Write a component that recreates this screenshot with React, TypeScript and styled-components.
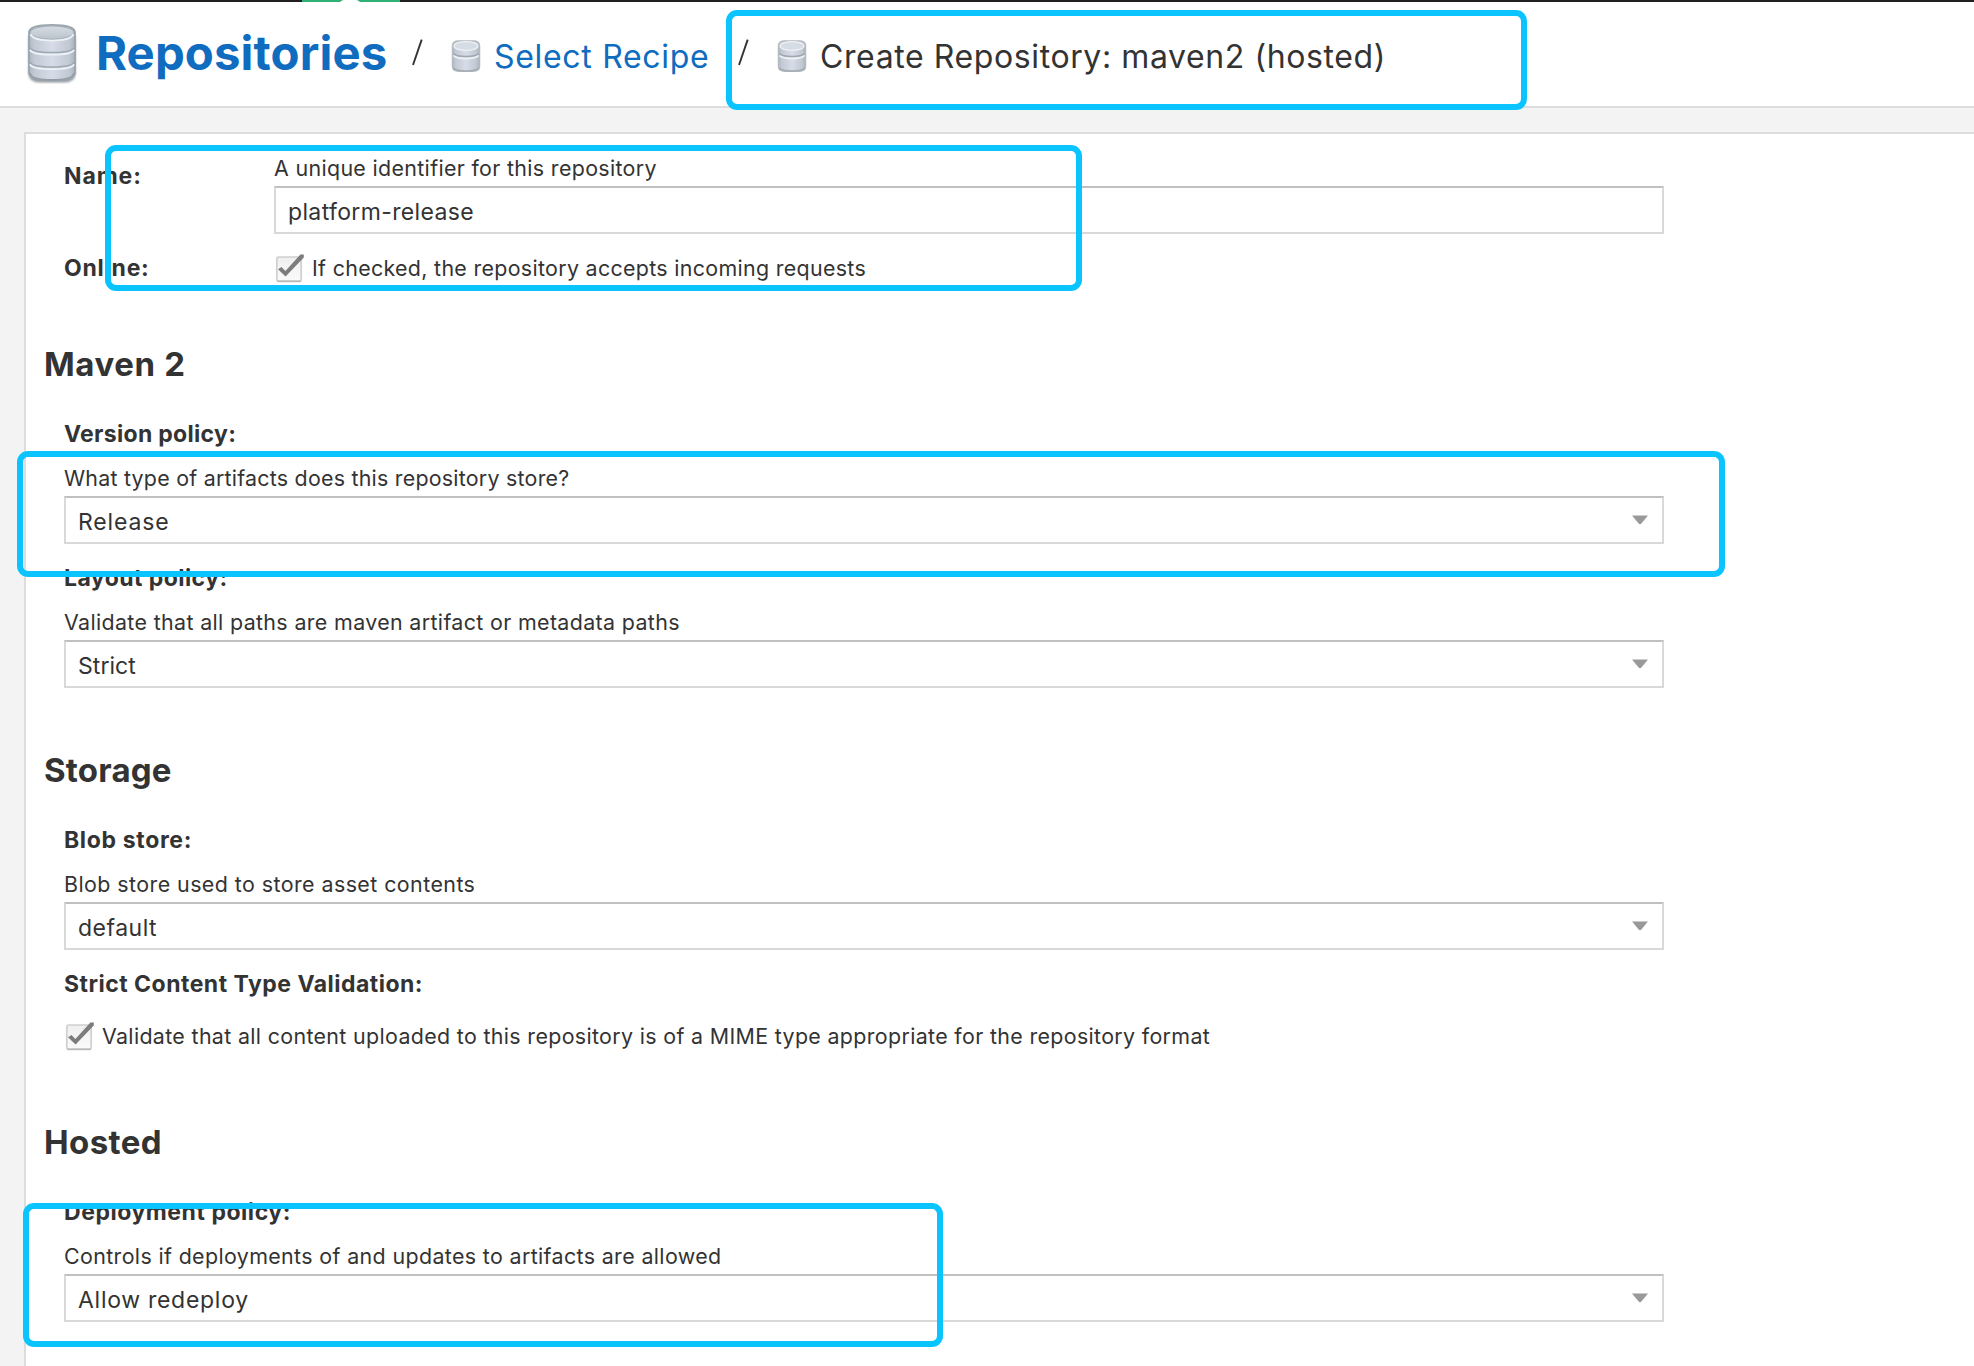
import React from "react";
import styled, { createGlobalStyle } from "styled-components";

const GlobalStyle = createGlobalStyle`
  *, *::before, *::after { box-sizing: border-box; }
  body {
    margin: 0;
    background: #f3f3f3;
    color: #333;
    font-family: Inter, "Open Sans", sans-serif;
    overflow: hidden;
  }
`;

const Page = styled.div`
  position: relative;
  display: flex;
  flex-direction: column;
  height: 1366px;
  overflow: hidden;
`;

const TopBar = styled.div`
  flex: none;
  height: 2px;
  padding-left: 302px;
  background: #221f20;
`;

const ActiveTab = styled.svg`
  display: block;
  width: 98px;
  height: 2px;
`;

const Header = styled.header`
  flex: none;
  display: flex;
  align-items: flex-start;
  height: 106px;
  padding-left: 26px;
  background: #fff;
  border-bottom: 2px solid #ddd;
`;

const Title = styled.h1`
  margin: 20px 0 0 18px;
  width: 316px;
  font-size: 47.3px;
  line-height: 62px;
  font-weight: 700;
  letter-spacing: 0.13px;
  color: #0f6cbf;
  white-space: nowrap;
`;

const Slash = styled.svg<{ $gap: number }>`
  flex: none;
  width: 12px;
  height: 28px;
  margin: 36px ${(p) => p.$gap}px 0 0;
`;

const Crumb = styled.span<{ $link?: boolean; $width: number; $track: number }>`
  margin: 35px 0 0 13px;
  width: ${(p) => p.$width}px;
  font-size: 32px;
  line-height: 40px;
  letter-spacing: ${(p) => p.$track}px;
  color: ${(p) => (p.$link ? "#0f6cbf" : "#333")};
  white-space: nowrap;
`;

const BigIcon = styled.svg`
  flex: none;
  width: 52px;
  height: 62px;
  margin-top: 20px;
`;

const SmallIcon = styled.svg`
  flex: none;
  width: 30px;
  height: 34px;
  margin-top: 37px;
`;

const Body = styled.main`
  flex: 1;
  padding: 24px 0 0 24px;
`;

const Panel = styled.form`
  height: 100%;
  padding: 19px 0 0 18px;
  background: #fff;
  border: solid #ddd;
  border-width: 2px 0 0 2px;
`;

const Fields = styled.div`
  width: 1620px;
  padding-left: 20px;
`;

const Row = styled.div<{ $top?: number }>`
  display: grid;
  grid-template-columns: 210px 1fr;
  margin-top: ${(p) => p.$top ?? 0}px;
`;

const Section = styled.section<{ $top: number }>`
  margin-top: ${(p) => p.$top}px;
`;

const Heading = styled.h2<{ $track: number }>`
  margin: 0;
  height: 75px;
  font-size: 33px;
  line-height: 40px;
  font-weight: 700;
  letter-spacing: ${(p) => p.$track}px;
`;

const Label = styled.label<{ $top?: number; $track: number }>`
  display: block;
  margin-top: ${(p) => p.$top ?? 0}px;
  font-size: 23px;
  line-height: 30px;
  font-weight: 700;
  letter-spacing: ${(p) => p.$track}px;
  white-space: nowrap;
`;

const Help = styled.div<{ $top?: number; $track: number }>`
  margin-top: ${(p) => p.$top ?? 0}px;
  height: 33px;
  font-size: 21.4px;
  line-height: 30px;
  letter-spacing: ${(p) => p.$track}px;
  white-space: nowrap;
`;

const Box = styled.div<{ $track: number }>`
  display: flex;
  align-items: center;
  justify-content: space-between;
  height: 48px;
  padding: 4px 14px 0 12px;
  background: #fff;
  border: 2px solid #d9d9d9;
  border-top-color: #c0c0c0;
  font-size: 23px;
  line-height: 30px;
  letter-spacing: ${(p) => p.$track}px;
`;

const Arrow = styled.svg`
  width: 16px;
  height: 10px;
  margin-bottom: 5px;
`;

const CheckRow = styled.div<{ $top?: number; $track: number }>`
  display: flex;
  align-items: flex-start;
  height: 30px;
  margin-top: ${(p) => p.$top ?? 0}px;
  font-size: 21.4px;
  line-height: 30px;
  letter-spacing: ${(p) => p.$track}px;
  white-space: nowrap;
`;

const CheckIcon = styled.svg`
  flex: none;
  width: 32px;
  height: 32px;
  margin-right: 6px;
`;

const Callout = styled.div<{ $x: number; $y: number; $w: number; $h: number }>`
  position: absolute;
  left: ${(p) => p.$x}px;
  top: ${(p) => p.$y}px;
  width: ${(p) => p.$w}px;
  height: ${(p) => p.$h}px;
  border: 6px solid #0ac4ff;
  border-radius: 11px;
  pointer-events: none;
`;

function Gradients({ id }: { id: string }) {
  return (
    <defs>
      <linearGradient id={`${id}-side`} x1="0" x2="1" y1="0" y2="0">
        <stop offset="0" stopColor="#adb7c1" />
        <stop offset="0.12" stopColor="#c3cad4" />
        <stop offset="0.5" stopColor="#d6dce8" />
        <stop offset="0.88" stopColor="#c0c8d2" />
        <stop offset="1" stopColor="#aab3bc" />
      </linearGradient>
      <linearGradient id={`${id}-top`} x1="0" x2="0" y1="0" y2="1">
        <stop offset="0" stopColor="#d6dce4" />
        <stop offset="1" stopColor="#bac3cc" />
      </linearGradient>
      <filter id={`${id}-shadow`} x="-20%" y="-20%" width="140%" height="140%">
        <feGaussianBlur stdDeviation="1.3" />
      </filter>
    </defs>
  );
}

function DatabaseLarge() {
  return (
    <BigIcon viewBox="0 0 52 62">
      <Gradients id="db" />
      <path d="M2.5 14V52Q3 60.5 14 60.5H38Q49 60.5 49.5 52V14Z" fill="#7d858c" opacity="0.8" filter="url(#db-shadow)" />
      <path d="M3 10Q4 3 26 3Q48 3 49 10V51Q48 58.6 26 58.6Q4 58.6 3 51Z" fill="url(#db-side)" stroke="#9aa5ad" strokeWidth="1.8" />
      <path d="M4 51Q5 57.8 26 57.8Q47 57.8 48 51" fill="none" stroke="#929ca5" strokeWidth="1.6" />
      <ellipse cx="26" cy="10.6" rx="21.8" ry="6.8" fill="url(#db-top)" stroke="#a5b0b8" strokeWidth="1.2" />
      <path d="M4.5 12.2Q7 18.6 26 18.6Q45 18.6 47.5 12.2" fill="none" stroke="#edf2f6" strokeWidth="1.8" />
      {[0, 14.5].map((dy) => (
        <g key={dy} transform={`translate(0 ${dy})`} fill="none">
          <path d="M4 25.5Q6 30.5 26 30.5Q46 30.5 48 25.5" stroke="#9da9b2" strokeWidth="1.6" />
          <path d="M4 27.8Q6 32.6 26 32.6Q46 32.6 48 27.8" stroke="#edf2f6" strokeWidth="1.9" />
        </g>
      ))}
    </BigIcon>
  );
}

function DatabaseSmall({ id }: { id: string }) {
  return (
    <SmallIcon viewBox="0 0 30 34">
      <Gradients id={id} />
      <path d="M1.5 7Q1.5 2 8 2H22Q28.5 2 28.5 7V27.5Q28.5 32.2 22 32.2H8Q1.5 32.2 1.5 27.5Z" fill={`url(#${id}-side)`} stroke="#b3bac0" strokeWidth="1.5" />
      <path d="M2.6 29Q5 32 15 32Q25 32 27.4 29" fill="none" stroke="#a5acb2" strokeWidth="1.5" />
      <ellipse cx="15" cy="7" rx="12" ry="4.4" fill="#d6dce3" stroke="#eef1f4" strokeWidth="1.2" />
      <path d="M2.5 14.5Q5 17.5 15 17.5Q25 17.5 27.5 14.5" fill="none" stroke="#9fa8af" strokeWidth="1.6" />
      <path d="M2.5 16.5Q5 19.6 15 19.6Q25 19.6 27.5 16.5" fill="none" stroke="#f0f3f6" strokeWidth="1.8" />
    </SmallIcon>
  );
}

function Separator({ gap }: { gap: number }) {
  return (
    <Slash $gap={gap} viewBox="0 0 12 28">
      <path d="M1 27L9.7 1.6" stroke="#333" strokeWidth="1.9" fill="none" />
    </Slash>
  );
}

function Checkbox() {
  return (
    <CheckIcon viewBox="0 0 32 32">
      <defs>
        <linearGradient id="check-fill" x1="0" y1="0" x2="0" y2="1">
          <stop offset="0" stopColor="#efefef" />
          <stop offset="1" stopColor="#fbfbfb" />
        </linearGradient>
      </defs>
      <rect x="2.8" y="4" width="24.4" height="24" rx="1.8" fill="url(#check-fill)" stroke="#d0d0d0" strokeWidth="1.7" />
      <path d="M3.2 28.4H27" stroke="#b9b9b9" strokeWidth="1.6" />
      <path d="M4 16.2L7.5 14L11.4 18L26.4 1.6H29.8V4.6L11.6 23.6Z" fill="#7c7c7c" />
    </CheckIcon>
  );
}

function Select({ value, track }: { value: string; track: number }) {
  return (
    <Box $track={track}>
      {value}
      <Arrow viewBox="0 0 16 10">
        <path d="M0 .6H16L9.4 8.6Q8 9.8 6.6 8.6Z" fill="#999" />
      </Arrow>
    </Box>
  );
}

export default function App() {
  return (
    <Page>
      <GlobalStyle />
      <TopBar>
        <ActiveTab viewBox="0 0 98 2">
          <rect width="98" height="2" fill="#2fb074" />
          <path d="M38 2Q40 0 42 0H54Q56 0 58 2Z" fill="#fff" />
        </ActiveTab>
      </TopBar>
      <Header>
        <DatabaseLarge />
        <Title>Repositories</Title>
        <Separator gap={27} />
        <DatabaseSmall id="recipe" />
        <Crumb $link $width={244} $track={0.69}>Select Recipe</Crumb>
        <Separator gap={27} />
        <DatabaseSmall id="create" />
        <Crumb $width={600} $track={0.6}>Create Repository: maven2 (hosted)</Crumb>
      </Header>
      <Body>
        <Panel>
          <Fields>
            <Row>
              <Label $top={8} $track={0.9}>Name:</Label>
              <div>
                <Help $track={0.34}>A unique identifier for this repository</Help>
                <Box $track={0.36}>platform-release</Box>
              </div>
            </Row>
            <Row $top={19}>
              <Label $track={0.76}>Online:</Label>
              <CheckRow $track={0.32}>
                <Checkbox />
                If checked, the repository accepts incoming requests
              </CheckRow>
            </Row>
          </Fields>
          <Section $top={61}>
            <Heading $track={0.6}>Maven 2</Heading>
            <Fields>
              <Label $track={0.31}>Version policy:</Label>
              <Help $top={14} $track={0.24}>What type of artifacts does this repository store?</Help>
              <Select value="Release" track={0.85} />
              <Label $top={19} $track={0.44}>Layout policy:</Label>
              <Help $top={14} $track={0.36}>Validate that all paths are maven artifact or metadata paths</Help>
              <Select value="Strict" track={0.05} />
            </Fields>
          </Section>
          <Section $top={62}>
            <Heading $track={0.2}>Storage</Heading>
            <Fields>
              <Label $track={0.65}>Blob store:</Label>
              <Help $top={14} $track={0.44}>Blob store used to store asset contents</Help>
              <Select value="default" track={0.5} />
              <Label $top={19} $track={0.49}>Strict Content Type Validation:</Label>
              <CheckRow $top={22} $track={0.345}>
                <Checkbox />
                Validate that all content uploaded to this repository is of a MIME type appropriate for the repository format
              </CheckRow>
            </Fields>
          </Section>
          <Section $top={71}>
            <Heading $track={0.4}>Hosted</Heading>
            <Fields>
              <Label $track={0.54}>Deployment policy:</Label>
              <Help $top={14} $track={0.37}>Controls if deployments of and updates to artifacts are allowed</Help>
              <Select value="Allow redeploy" track={0.72} />
            </Fields>
          </Section>
        </Panel>
      </Body>
      <Callout $x={726} $y={10} $w={801} $h={100} />
      <Callout $x={105} $y={145} $w={977} $h={146} />
      <Callout $x={17} $y={451} $w={1708} $h={126} />
      <Callout $x={23} $y={1203} $w={920} $h={144} />
    </Page>
  );
}
